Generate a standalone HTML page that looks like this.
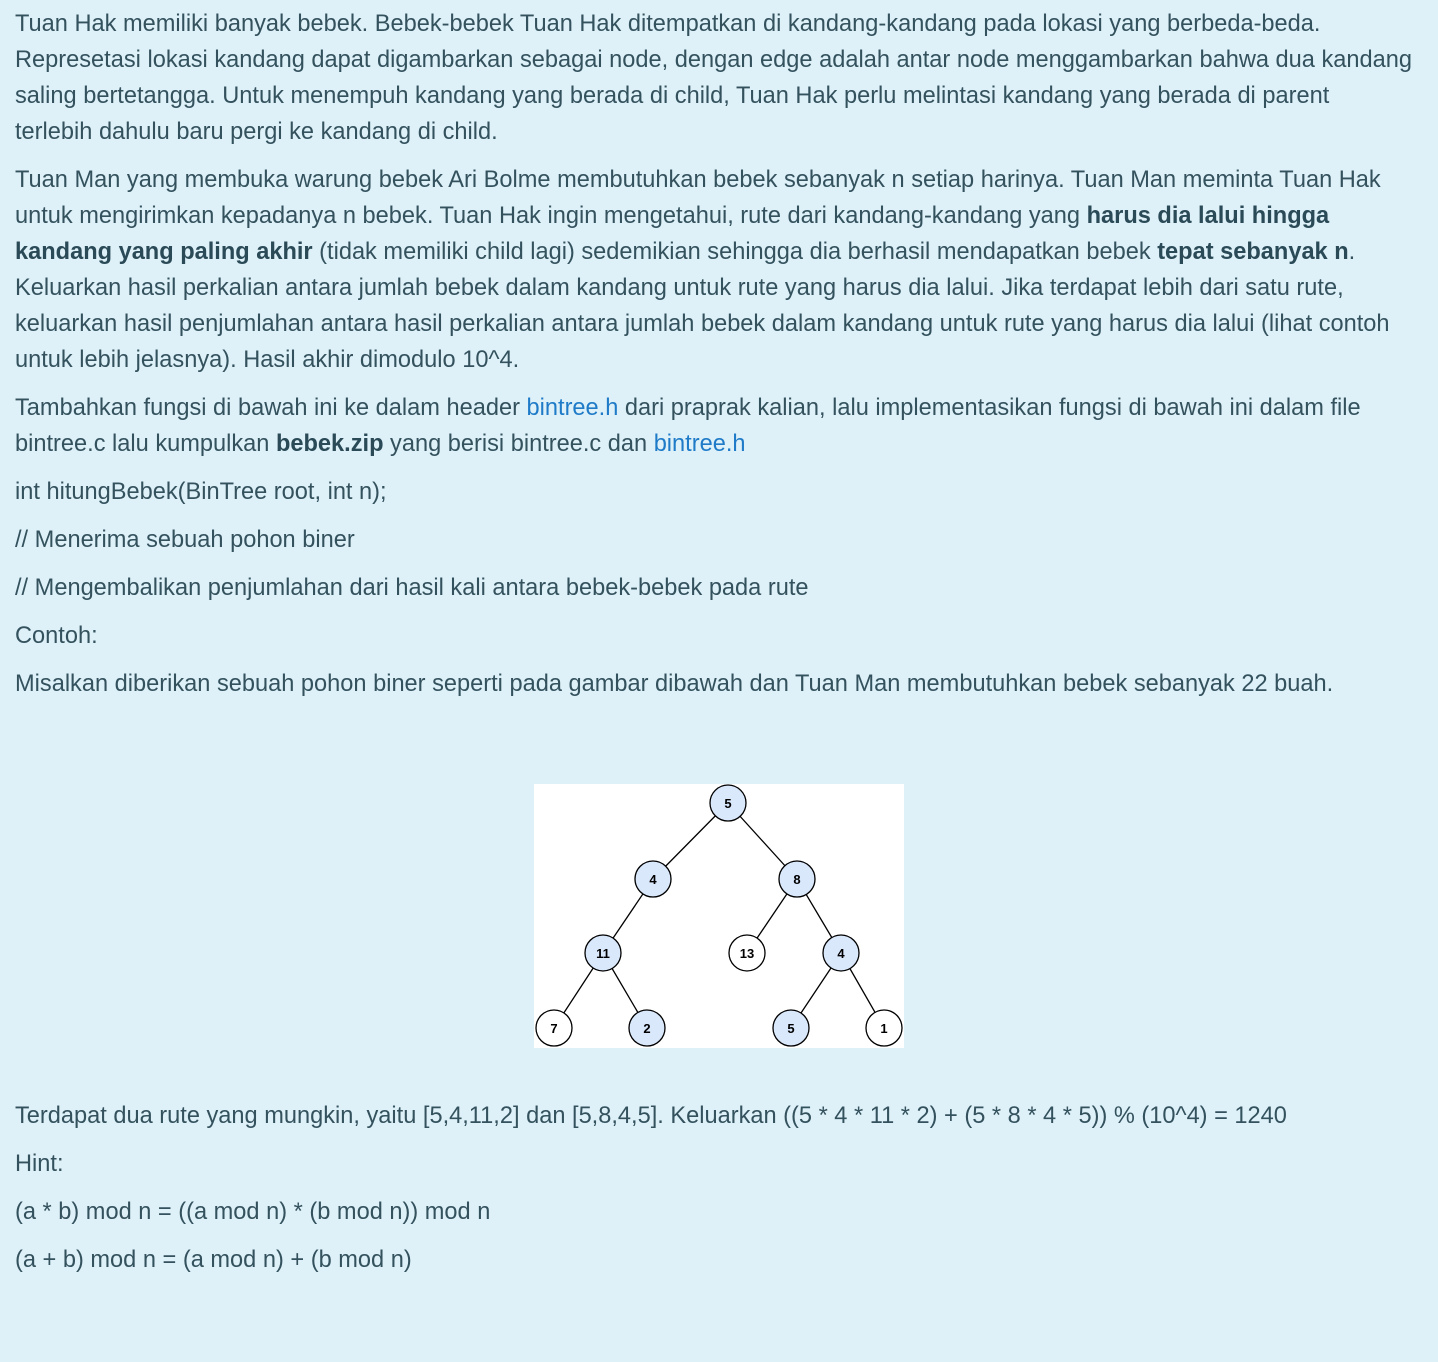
<!DOCTYPE html>
<html><head><meta charset="utf-8"><style>
html,body{margin:0;padding:0;background:#def1f8;}
body{width:1438px;height:1362px;overflow:hidden;font-family:"Liberation Sans",sans-serif;font-size:23.6px;color:#34525e;padding-top:6px;box-sizing:border-box;}
p{margin:0 0 12px 15px;line-height:36px;white-space:nowrap;}
b{color:#2a4a57;}
a{color:#1f7bc8;text-decoration:none;}
.img{height:384px;position:relative;margin:0;}
svg{position:absolute;left:534px;top:70px;}
</style></head><body>
<p>Tuan Hak memiliki banyak bebek. Bebek-bebek Tuan Hak ditempatkan di kandang-kandang pada lokasi yang berbeda-beda.<br>Represetasi lokasi kandang dapat digambarkan sebagai node, dengan edge adalah antar node menggambarkan bahwa dua kandang<br>saling bertetangga. Untuk menempuh kandang yang berada di child, Tuan Hak perlu melintasi kandang yang berada di parent<br>terlebih dahulu baru pergi ke kandang di child.</p>
<p>Tuan Man yang membuka warung bebek Ari Bolme membutuhkan bebek sebanyak n setiap harinya. Tuan Man meminta Tuan Hak<br>untuk mengirimkan kepadanya n bebek. Tuan Hak ingin mengetahui, rute dari kandang-kandang yang <b>harus dia lalui hingga</b><br><b>kandang yang paling akhir</b> (tidak memiliki child lagi) sedemikian sehingga dia berhasil mendapatkan bebek <b>tepat sebanyak n</b>.<br>Keluarkan hasil perkalian antara jumlah bebek dalam kandang untuk rute yang harus dia lalui. Jika terdapat lebih dari satu rute,<br>keluarkan hasil penjumlahan antara hasil perkalian antara jumlah bebek dalam kandang untuk rute yang harus dia lalui (lihat contoh<br>untuk lebih jelasnya). Hasil akhir dimodulo 10^4.</p>
<p>Tambahkan fungsi di bawah ini ke dalam header <a>bintree.h</a> dari praprak kalian, lalu implementasikan fungsi di bawah ini dalam file<br>bintree.c lalu kumpulkan <b>bebek.zip</b> yang berisi bintree.c dan <a>bintree.h</a></p>
<p>int hitungBebek(BinTree root, int n);</p>
<p>// Menerima sebuah pohon biner</p>
<p>// Mengembalikan penjumlahan dari hasil kali antara bebek-bebek pada rute</p>
<p>Contoh:</p>
<p>Misalkan diberikan sebuah pohon biner seperti pada gambar dibawah dan Tuan Man membutuhkan bebek sebanyak 22 buah.</p>
<div class="img">
<svg width="370" height="264" viewBox="534 784 370 264" font-family="Liberation Sans" font-weight="bold" font-size="13">
<rect x="534" y="784" width="370" height="264" fill="#fff"/>
<g stroke="#000" stroke-width="1.3">
<line x1="728" y1="803" x2="653" y2="879"/><line x1="728" y1="803" x2="797" y2="879"/>
<line x1="653" y1="879" x2="603" y2="953"/><line x1="797" y1="879" x2="747" y2="953"/><line x1="797" y1="879" x2="841" y2="953"/>
<line x1="603" y1="953" x2="554" y2="1028"/><line x1="603" y1="953" x2="647" y2="1028"/>
<line x1="841" y1="953" x2="791" y2="1028"/><line x1="841" y1="953" x2="884" y2="1028"/>
</g>
<g stroke="#000" stroke-width="1.3">
<circle cx="728" cy="803" r="18" fill="#dae8fc"/>
<circle cx="653" cy="879" r="18" fill="#dae8fc"/>
<circle cx="797" cy="879" r="18" fill="#dae8fc"/>
<circle cx="603" cy="953" r="18" fill="#dae8fc"/>
<circle cx="747" cy="953" r="18" fill="#fff"/>
<circle cx="841" cy="953" r="18" fill="#dae8fc"/>
<circle cx="554" cy="1028" r="18" fill="#fff"/>
<circle cx="647" cy="1028" r="18" fill="#dae8fc"/>
<circle cx="791" cy="1028" r="18" fill="#dae8fc"/>
<circle cx="884" cy="1028" r="18" fill="#fff"/>
</g>
<g text-anchor="middle">
<text x="728" y="808">5</text><text x="653" y="884">4</text><text x="797" y="884">8</text>
<text x="603" y="958">11</text><text x="747" y="958">13</text><text x="841" y="958">4</text>
<text x="554" y="1033">7</text><text x="647" y="1033">2</text><text x="791" y="1033">5</text><text x="884" y="1033">1</text>
</g>
</svg>
</div>
<p>Terdapat dua rute yang mungkin, yaitu [5,4,11,2] dan [5,8,4,5]. Keluarkan ((5 * 4 * 11 * 2) + (5 * 8 * 4 * 5)) % (10^4) = 1240</p>
<p>Hint:</p>
<p>(a * b) mod n = ((a mod n) * (b mod n)) mod n</p>
<p>(a + b) mod n = (a mod n) + (b mod n)</p>
</body></html>
